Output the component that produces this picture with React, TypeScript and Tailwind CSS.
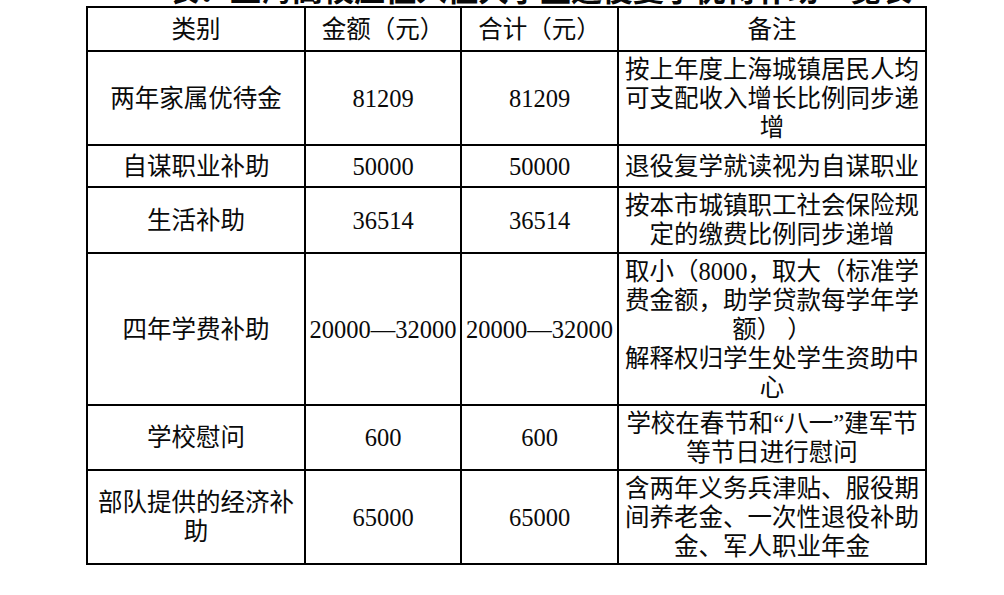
const rows = [
  { cat: ["两年家属优待金"], amount: "81209", total: "81209", note: ["按上年度上海城镇居民人均", "可支配收入增长比例同步递", "增"], h: "h-[94px]" },
  { cat: ["自谋职业补助"], amount: "50000", total: "50000", note: ["退役复学就读视为自谋职业"], h: "h-[42px]" },
  { cat: ["生活补助"], amount: "36514", total: "36514", note: ["按本市城镇职工社会保险规", "定的缴费比例同步递增"], h: "h-[66px]" },
  {
    cat: ["四年学费补助"],
    amount: "20000—32000",
    total: "20000—32000",
    note: ["取小（8000，取大（标准学", "费金额，助学贷款每学年学", "额） ）", "解释权归学生处学生资助中", "心"],
    h: "h-[152px]",
  },
  { cat: ["学校慰问"], amount: "600", total: "600", note: ["学校在春节和“八一”建军节", "等节日进行慰问"], h: "h-[65px]" },
  { cat: ["部队提供的经济补", "助"], amount: "65000", total: "65000", note: ["含两年义务兵津贴、服役期", "间养老金、一次性退役补助", "金、军人职业年金"], h: "h-[94px]" },
];

function Cell({ lines, h }: { lines: string[]; h: string }) {
  return (
    <div className={`flex ${h} flex-col items-center justify-center border-r-2 border-b-2 border-black text-center`}>
      {lines.map((l, i) => (
        <div key={i} className="whitespace-pre">
          {l}
        </div>
      ))}
    </div>
  );
}

export default function App() {
  return (
    <div className="h-[595px] w-[1004px] overflow-hidden bg-white font-['Liberation_Serif','Noto_Sans_CJK_SC',serif] text-[24.5px] leading-[29px] text-[#0a0a0a]">
      {/* title, cut off at the top of the shot */}
      <div className="flex h-[6px] items-end overflow-hidden pl-[168px]">
        <div className="whitespace-nowrap text-[31px] leading-[31px] font-bold">表：上海高校应征入伍大学生退役复学优待补助一览表</div>
      </div>

      <div className="ml-[86px] grid w-[841px] grid-cols-[218px_156px_157px_308px] border-t-2 border-l-2 border-black">
        <Cell lines={["类别"]} h="h-[44px]" />
        <Cell lines={["金额（元）"]} h="h-[44px]" />
        <Cell lines={["合计（元）"]} h="h-[44px]" />
        <Cell lines={["备注"]} h="h-[44px]" />
        {rows.map((r, i) => (
          <div key={i} className="contents">
            <Cell lines={r.cat} h={r.h} />
            <Cell lines={[r.amount]} h={r.h} />
            <Cell lines={[r.total]} h={r.h} />
            <Cell lines={r.note} h={r.h} />
          </div>
        ))}
      </div>
    </div>
  );
}
